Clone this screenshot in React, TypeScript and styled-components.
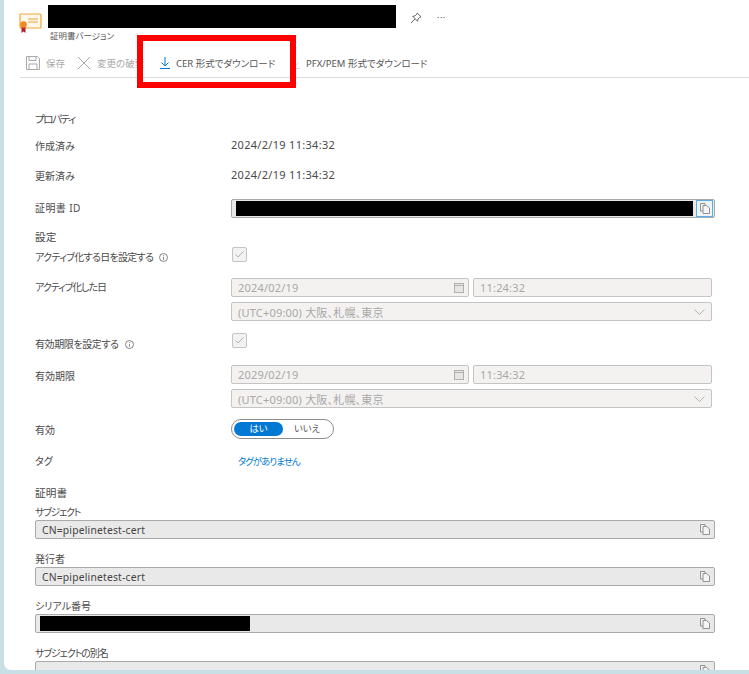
import React, { FC } from "react";
import styled, { createGlobalStyle } from "styled-components";

const GlobalStyle = createGlobalStyle`
  html, body {
    margin: 0;
    padding: 0;
    background: #c9dfe6;
  }
  body {
    font-family: "Noto Sans", "Noto Sans CJK JP", sans-serif;
    font-feature-settings: "palt";
    color: #4a4a4a;
  }
`;

const Shell = styled.div`
  position: relative;
  width: 749px;
  height: 674px;
  box-sizing: border-box;
  padding: 0 0 4px 4px;
  overflow: hidden;
`;

const Card = styled.div`
  height: 100%;
  background: #fff;
  border-radius: 0 0 0 7px;
  overflow: hidden;
`;

const Header = styled.header`
  display: flex;
  align-items: flex-start;
  box-sizing: border-box;
  height: 52px;
  padding: 5px 0 0 15px;
`;

const CertSlot = styled.div`
  width: 29px;
  padding-top: 8px;
`;

const TitleBlock = styled.div`
  display: flex;
  flex-direction: column;
`;

const TitleMask = styled.div`
  width: 348px;
  height: 23px;
  background: #000;
`;

const Subtitle = styled.div`
  margin: 2px 0 0 2px;
  font-size: 8.5px;
  line-height: 12px;
  color: #555;
`;

const HeaderActions = styled.div`
  display: flex;
  align-items: center;
  gap: 15px;
  margin: 7px 0 0 14px;
  color: #555;
`;

const Dots = styled.span`
  font-size: 9px;
  line-height: 12px;
  letter-spacing: 0.5px;
`;

const Toolbar = styled.nav`
  display: flex;
  align-items: center;
  box-sizing: border-box;
  height: 26px;
  margin-left: 16px;
  padding: 0 0 4px 6px;
  border-bottom: 1px solid #dcdcdc;
`;

const ToolButton = styled.div<{ $width: number; $disabled?: boolean }>`
  display: flex;
  align-items: center;
  gap: 6px;
  width: ${({ $width }) => $width}px;
  flex: none;
  font-size: 9.5px;
  white-space: nowrap;
  color: ${({ $disabled }) => ($disabled ? "#a8a8a8" : "#555")};
`;

const Form = styled.main`
  display: flex;
  flex-direction: column;
  padding: 31px 0 0 31px;
`;

const Row = styled.div<{ $gap?: number }>`
  display: grid;
  grid-template-columns: 196px 484px;
  align-items: start;
  margin-top: ${({ $gap }) => $gap ?? 0}px;
`;

const Label = styled.div<{ $shift?: number; $tracking?: number }>`
  display: flex;
  align-items: center;
  gap: 6px;
  font-size: 10px;
  line-height: 19px;
  letter-spacing: ${({ $tracking }) => $tracking ?? 0}px;
  margin-top: ${({ $shift }) => $shift ?? 0}px;
`;

const Heading = styled.div<{ $gap?: number; $after?: number; $tracking?: number }>`
  height: 20px;
  line-height: 20px;
  margin-top: ${({ $gap }) => $gap ?? 0}px;
  margin-bottom: ${({ $after }) => $after ?? 0}px;
  font-size: 10.7px;
  letter-spacing: ${({ $tracking }) => $tracking ?? 0}px;
`;

const Value = styled.div`
  font-size: 11px;
  line-height: 20px;
  letter-spacing: 0.3px;
`;

const Stack = styled.div`
  display: flex;
  flex-direction: column;
  gap: 5px;
`;

const InputRow = styled.div`
  display: flex;
  gap: 4px;
`;

const DisabledInput = styled.div<{ $width: number }>`
  display: flex;
  align-items: center;
  justify-content: space-between;
  box-sizing: border-box;
  width: ${({ $width }) => $width}px;
  height: 19px;
  padding: 0 6px;
  background: #f3f2f1;
  border: 1px solid #c4c4c4;
  border-radius: 2px;
  font-size: 11px;
  letter-spacing: 0.2px;
  color: #a8a8a8;
`;

const ReadonlyInput = styled.div<{ $width: number }>`
  display: flex;
  align-items: center;
  justify-content: space-between;
  box-sizing: border-box;
  width: ${({ $width }) => $width}px;
  height: 19px;
  padding: 0 4px 0 6px;
  background: #e9e9e9;
  border: 1px solid #a9a9a9;
  border-radius: 2px;
  font-size: 10.3px;
  letter-spacing: 0.2px;
  color: #444;
`;

const Mask = styled.div<{ $width: number }>`
  width: ${({ $width }) => $width}px;
  height: 15px;
  margin-left: -2px;
  background: #000;
`;

const CopyFocus = styled.div`
  display: flex;
  align-items: center;
  justify-content: center;
  box-sizing: border-box;
  width: 17px;
  height: 17px;
  margin-right: -3px;
  background: #eef3f6;
  border: 1px solid #5aaee8;
`;

const CheckBox = styled.div`
  display: flex;
  align-items: center;
  justify-content: center;
  box-sizing: border-box;
  width: 15px;
  height: 15px;
  margin-left: 1px;
  background: #f3f2f1;
  border: 1px solid #c4c4c4;
  border-radius: 2px;
`;

const Toggle = styled.div`
  display: flex;
  align-items: center;
  box-sizing: border-box;
  width: 103px;
  height: 20px;
  padding: 0 2px;
  border: 1px solid #8c8c8c;
  border-radius: 10px;
  font-size: 9.4px;
`;

const ToggleOption = styled.div<{ $active?: boolean }>`
  flex: ${({ $active }) => ($active ? "0 0 49px" : "1")};
  height: 14px;
  line-height: 14px;
  text-align: center;
  border-radius: 7px;
  background: ${({ $active }) => ($active ? "#0078d4" : "transparent")};
  color: ${({ $active }) => ($active ? "#fff" : "#555")};
`;

const TagLink = styled.div`
  margin: 2px 0 0 7px;
  font-size: 9.4px;
  line-height: 20px;
  letter-spacing: -0.9px;
  color: #0078d4;
`;

const Field = styled.div`
  display: flex;
  flex-direction: column;
  margin-bottom: 12px;
`;

const FieldLabel = styled.div<{ $tracking?: number }>`
  height: 16px;
  line-height: 16px;
  font-size: 10px;
  letter-spacing: ${({ $tracking }) => $tracking ?? 0}px;
`;

const CalendarSlot = styled.span`
  display: flex;
  margin-right: -2px;
`;

const Highlight = styled.div`
  position: absolute;
  left: 137px;
  top: 35px;
  width: 159px;
  height: 53px;
  box-sizing: border-box;
  border: 6px solid #ff0000;
  pointer-events: none;
`;

const CertIcon: FC = () => (
  <svg width="23" height="21" viewBox="0 0 23 21" fill="none">
    <rect x="1" y="1" width="21" height="14" rx="1" fill="#fff7ea" stroke="#f2a33a" strokeWidth="1.2" />
    <path d="M9 6h10M9 9h10" stroke="#f2a33a" strokeWidth="1.2" />
    <path d="M2.5 14v6l2-1.5L6.500 20v-6z" fill="#b3202c" />
    <circle cx="4.500" cy="11.500" r="3.300" fill="#f08a1d" />
  </svg>
);

const PinIcon: FC = () => (
  <svg width="12" height="12" viewBox="0 0 12 12" fill="none" stroke="#555" strokeWidth="0.9">
    <path d="M7.200 1 11 4.800 9.800 5.300 8 7.100 7.700 9.300 2.700 4.300 4.900 4 6.700 2.200zM5 7 1 11" />
  </svg>
);

const SaveIcon: FC = () => (
  <svg width="14" height="14" viewBox="0 0 14 14" fill="none" stroke="#a8a8a8" strokeWidth="1">
    <path d="M.5.500h11l2 2v11H.5z" />
    <path d="M3 .5v4h7v-4M3 13.500V8h8v5.500" />
  </svg>
);

const CloseIcon: FC = () => (
  <svg width="14" height="14" viewBox="0 0 14 14" fill="none" stroke="#a8a8a8" strokeWidth="1">
    <path d="M1 1l12 12M13 1 1 13" />
  </svg>
);

const DownloadIcon: FC<{ color: string }> = ({ color }) => (
  <svg width="10" height="12" viewBox="0 0 10 12" fill="none" stroke={color} strokeWidth="1">
    <path d="M5 0v9M1.500 5.500 5 9l3.500-3.500M0 11.500h10" />
  </svg>
);

const CopyIcon: FC = () => (
  <svg width="10" height="11" viewBox="0 0 10 11" fill="#f4f4f4" stroke="#888" strokeWidth="0.9">
    <path d="M.5.500h4.500v7.500H.5z" />
    <path d="M3 2.500h3.500L9.500 5v5.500H3z" />
  </svg>
);

const CalendarIcon: FC = () => (
  <svg width="10" height="10" viewBox="0 0 10 10" fill="#e6e6e6" stroke="#b0b0b0" strokeWidth="1">
    <rect x=".5" y=".5" width="9" height="9" />
    <path d="M.5 2.500h9" />
  </svg>
);

const ChevronIcon: FC = () => (
  <svg width="11" height="6" viewBox="0 0 11 6" fill="none" stroke="#a8a8a8" strokeWidth="0.9">
    <path d="M.5.500 5.500 5.500 10.500.5" />
  </svg>
);

const CheckIcon: FC = () => (
  <svg width="9" height="7" viewBox="0 0 9 7" fill="none" stroke="#a8a8a8" strokeWidth="0.9">
    <path d="M.5 3.500 3 6 8.500.5" />
  </svg>
);

const InfoIcon: FC = () => (
  <svg width="9" height="9" viewBox="0 0 9 9" fill="none" stroke="#666" strokeWidth="0.8">
    <circle cx="4.500" cy="4.500" r="4" />
    <path d="M4.500 4v2.800M4.500 2.200v1" />
  </svg>
);

const DateGroup: FC<{ date: string; time: string }> = ({ date, time }) => (
  <Stack>
    <InputRow>
      <DisabledInput $width={238}>
        {date}
        <CalendarSlot>
          <CalendarIcon />
        </CalendarSlot>
      </DisabledInput>
      <DisabledInput $width={239}>{time}</DisabledInput>
    </InputRow>
    <DisabledInput $width={481}>
      (UTC+09:00) 大阪、札幌、東京
      <ChevronIcon />
    </DisabledInput>
  </Stack>
);

const App: FC = () => {
  return (
    <Shell>
      <GlobalStyle />
      <Card>
        <Header>
          <CertSlot>
            <CertIcon />
          </CertSlot>
          <TitleBlock>
            <TitleMask />
            <Subtitle>証明書バージョン</Subtitle>
          </TitleBlock>
          <HeaderActions>
            <PinIcon />
            <Dots>···</Dots>
          </HeaderActions>
        </Header>

        <Toolbar>
          <ToolButton $width={51} $disabled>
            <SaveIcon />
            保存
          </ToolButton>
          <ToolButton $width={83} $disabled>
            <CloseIcon />
            変更の破棄
          </ToolButton>
          <ToolButton $width={130}>
            <DownloadIcon color="#0078d4" />
            CER 形式でダウンロード
          </ToolButton>
          <ToolButton $width={140}>
            <DownloadIcon color="#d8d8d8" />
            PFX/PEM 形式でダウンロード
          </ToolButton>
        </Toolbar>

        <Form>
          <Heading $tracking={-1.6}>プロパティ</Heading>
          <Row $gap={6}>
            <Label $shift={2}>作成済み</Label>
            <Value>2024/2/19 11:34:32</Value>
          </Row>
          <Row $gap={9}>
            <Label $shift={2}>更新済み</Label>
            <Value>2024/2/19 11:34:32</Value>
          </Row>
          <Row $gap={13}>
            <Label $tracking={0.4}>証明書 ID</Label>
            <ReadonlyInput $width={484}>
              <Mask $width={457} />
              <CopyFocus>
                <CopyIcon />
              </CopyFocus>
            </ReadonlyInput>
          </Row>

          <Heading $gap={9}>設定</Heading>
          <Row>
            <Label $shift={1} $tracking={-0.7}>
              アクティブ化する日を設定する <InfoIcon />
            </Label>
            <CheckBox>
              <CheckIcon />
            </CheckBox>
          </Row>
          <Row $gap={11}>
            <Label $tracking={-1.1}>アクティブ化した日</Label>
            <DateGroup date="2024/02/19" time="11:24:32" />
          </Row>
          <Row $gap={12}>
            <Label $shift={2} $tracking={-0.4}>
              有効期限を設定する <InfoIcon />
            </Label>
            <CheckBox>
              <CheckIcon />
            </CheckBox>
          </Row>
          <Row $gap={11}>
            <Label $shift={2}>有効期限</Label>
            <DateGroup date="2029/02/19" time="11:34:32" />
          </Row>
          <Row $gap={11}>
            <Label $shift={2}>有効</Label>
            <Toggle>
              <ToggleOption $active>はい</ToggleOption>
              <ToggleOption>いいえ</ToggleOption>
            </Toggle>
          </Row>
          <Row $gap={10}>
            <Label $shift={2}>タグ</Label>
            <TagLink>タグがありません</TagLink>
          </Row>

          <Heading $gap={11} $after={1}>
            証明書
          </Heading>
          <Field>
            <FieldLabel $tracking={-1.3}>サブジェクト</FieldLabel>
            <ReadonlyInput $width={680}>
              CN=pipelinetest-cert
              <CopyIcon />
            </ReadonlyInput>
          </Field>
          <Field>
            <FieldLabel>発行者</FieldLabel>
            <ReadonlyInput $width={680}>
              CN=pipelinetest-cert
              <CopyIcon />
            </ReadonlyInput>
          </Field>
          <Field>
            <FieldLabel>シリアル番号</FieldLabel>
            <ReadonlyInput $width={680}>
              <Mask $width={210} />
              <CopyIcon />
            </ReadonlyInput>
          </Field>
          <Field>
            <FieldLabel $tracking={-1.1}>サブジェクトの別名</FieldLabel>
            <ReadonlyInput $width={680}>
              <span />
              <CopyIcon />
            </ReadonlyInput>
          </Field>
        </Form>
      </Card>
      <Highlight />
    </Shell>
  );
};

export default App;
